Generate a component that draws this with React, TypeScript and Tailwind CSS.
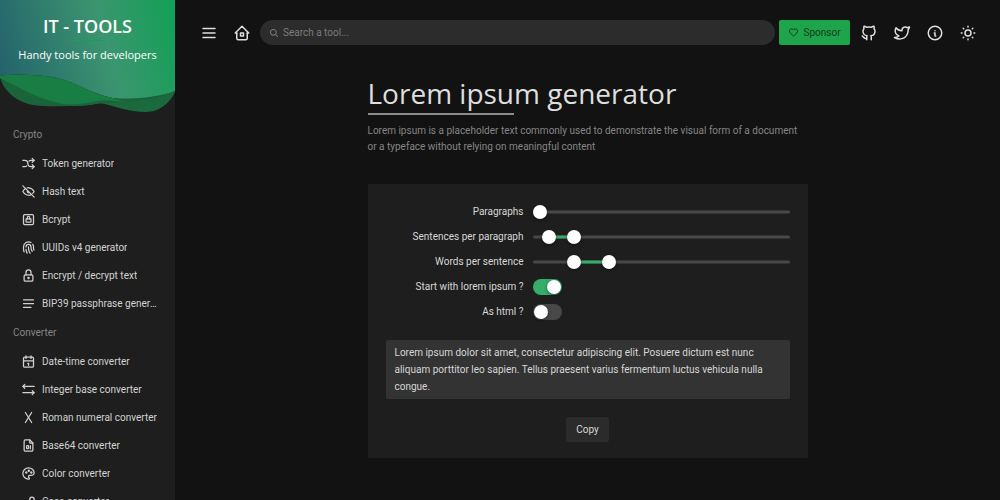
import { useState } from "react";
import type { ReactNode } from "react";
import type { IconType } from "react-icons";
import {
  TbAlignJustified,
  TbArrowsLeftRight,
  TbArrowsShuffle,
  TbBrandGithub,
  TbBrandTwitter,
  TbCalendar,
  TbEyeOff,
  TbFileDigit,
  TbFingerprint,
  TbHeart,
  TbHome2,
  TbInfoCircle,
  TbLetterCaseToggle,
  TbLetterX,
  TbLock,
  TbLockSquare,
  TbMenu2,
  TbPalette,
  TbSun,
} from "react-icons/tb";
import { IoSearch } from "react-icons/io5";

type Tool = { name: string; icon: IconType };

const categories: { name: string; tools: Tool[] }[] = [
  {
    name: "Crypto",
    tools: [
      { name: "Token generator", icon: TbArrowsShuffle },
      { name: "Hash text", icon: TbEyeOff },
      { name: "Bcrypt", icon: TbLockSquare },
      { name: "UUIDs v4 generator", icon: TbFingerprint },
      { name: "Encrypt / decrypt text", icon: TbLock },
      { name: "BIP39 passphrase generator", icon: TbAlignJustified },
    ],
  },
  {
    name: "Converter",
    tools: [
      { name: "Date-time converter", icon: TbCalendar },
      { name: "Integer base converter", icon: TbArrowsLeftRight },
      { name: "Roman numeral converter", icon: TbLetterX },
      { name: "Base64 converter", icon: TbFileDigit },
      { name: "Color converter", icon: TbPalette },
      { name: "Case converter", icon: TbLetterCaseToggle },
    ],
  },
];

const loremText =
  "Lorem ipsum dolor sit amet, consectetur adipiscing elit. Posuere dictum est nunc aliquam porttitor leo sapien. Tellus praesent varius fermentum luctus vehicula nulla congue.";

const THUMB = 14;

function thumbCenter(value: number, min: number, max: number) {
  const ratio = (value - min) / (max - min);
  return `calc(${THUMB / 2}px + (100% - ${THUMB}px) * ${ratio})`;
}

function Slider({
  id,
  label,
  min,
  max,
  values,
  onChange,
}: {
  id: string;
  label: string;
  min: number;
  max: number;
  values: number[];
  onChange: (values: number[]) => void;
}) {
  const start = values.length > 1 ? thumbCenter(values[0], min, max) : "0px";
  const end = thumbCenter(values[values.length - 1], min, max);

  return (
    <div className="relative h-4 w-full">
      <div className="absolute inset-x-0 top-1/2 h-[3px] -translate-y-1/2 rounded-full bg-[#484848]" />
      <div
        className="absolute top-1/2 h-[3px] -translate-y-1/2 bg-[#36ad6a]"
        style={{ left: start, width: `calc(${end} - ${start})` }}
      />
      {values.map((value, i) => (
        <input
          key={i}
          id={i === 0 ? id : `${id}-max`}
          aria-label={i === 0 ? undefined : `${label} (max)`}
          type="range"
          min={min}
          max={max}
          value={value}
          onChange={(e) => {
            const next = [...values];
            next[i] = Number(e.target.value);
            onChange(next.sort((a, b) => a - b));
          }}
          className="pointer-events-none absolute inset-0 m-0 h-full w-full appearance-none bg-transparent [&::-webkit-slider-thumb]:pointer-events-auto [&::-webkit-slider-thumb]:size-[14px] [&::-webkit-slider-thumb]:appearance-none [&::-webkit-slider-thumb]:rounded-full [&::-webkit-slider-thumb]:bg-white [&::-webkit-slider-thumb]:shadow-[0_1px_3px_rgba(0,0,0,0.5)]"
        />
      ))}
    </div>
  );
}

function Switch({ id, checked, onChange }: { id: string; checked: boolean; onChange: (checked: boolean) => void }) {
  return (
    <input
      id={id}
      type="checkbox"
      role="switch"
      checked={checked}
      onChange={(e) => onChange(e.target.checked)}
      className="block h-[16px] w-[29px] cursor-pointer appearance-none rounded-full bg-[#484848] p-px before:block before:size-[14px] before:rounded-full before:bg-white before:shadow-[0_1px_3px_rgba(0,0,0,0.5)] checked:bg-[#36ad6a] checked:before:translate-x-[13px]"
    />
  );
}

function FormRow({ id, label, children }: { id: string; label: string; children: ReactNode }) {
  return (
    <div className="flex h-[25px] items-center gap-[9px]">
      <label htmlFor={id} className="w-[138px] shrink-0 text-right">
        {label}
      </label>
      <div className="flex-1">{children}</div>
    </div>
  );
}

function HeroBackground() {
  return (
    <svg
      className="absolute inset-x-0 top-0 h-[113px] w-full"
      viewBox="0 0 175 113"
      preserveAspectRatio="none"
      aria-hidden="true"
    >
      <defs>
        <linearGradient id="hero" gradientUnits="userSpaceOnUse" x1="0" y1="70" x2="175" y2="20">
          <stop offset="0" stopColor="#25636c" />
          <stop offset="0.6" stopColor="#3b956f" />
          <stop offset="1" stopColor="#14a058" />
        </linearGradient>
      </defs>
      <path d="M0 0H175V91C158 99 134 102 112 98C86 92 70 78 44 76C28 75 12 74 0 76Z" fill="url(#hero)" />
      <path
        d="M0 76C12 74 28 75 44 76C70 78 86 92 112 98C134 102 158 99 175 91C172 101 160 112 146 112C128 112 116 106 100 103C88 106 78 107 62 105C38 101 20 88 0 78Z"
        fill="#1a6a3e"
      />
      <path
        d="M0 76C2 91 20 106 43 106C66 107 85 105 105 103C130 103 150 101 175 91C158 97 134 100 112 98C86 92 70 78 44 76C28 75 12 74 0 76Z"
        fill="#1a633b"
      />
      <path
        d="M0 76C12 74 28 75 44 76C70 78 86 92 112 98L124 102C114 101 106 100 98 101C84 104 74 105 62 104C38 99 20 88 0 78Z"
        fill="#187e43"
      />
    </svg>
  );
}

function Sidebar() {
  return (
    <aside className="h-full w-[175px] shrink-0 overflow-hidden bg-[#1e1e1e]">
      <a href="#" className="relative block h-[119px] text-center font-['Open_Sans','Noto_Sans',sans-serif] text-white">
        <HeroBackground />
        <div className="relative pt-[14px]">
          <div className="text-[18px] leading-6 font-semibold">IT - TOOLS</div>
          <div className="mx-auto mt-[2px] h-px w-9 bg-[#18a058]" />
          <div className="mt-[6px] text-[11px] leading-4">Handy tools for developers</div>
        </div>
      </a>
      <nav>
        {categories.map((category) => (
          <section key={category.name}>
            <h2 className="flex h-[30px] items-center pl-[13px] text-[10px] text-[#858585]">{category.name}</h2>
            <ul>
              {category.tools.map(({ name, icon: Icon }) => (
                <li key={name}>
                  <a href="#" className="flex h-7 items-center gap-[6px] pr-[14px] pl-[21px] text-[#d2d2d2]">
                    <Icon className="size-[15px] shrink-0" />
                    <span className="truncate">{name}</span>
                  </a>
                </li>
              ))}
            </ul>
          </section>
        ))}
      </nav>
    </aside>
  );
}

function IconButton({ label, icon: Icon }: { label: string; icon: IconType }) {
  return (
    <button type="button" aria-label={label} className="flex h-[25px] w-[33px] items-center justify-center text-[#dedede]">
      <Icon className="size-[18px]" />
    </button>
  );
}

function Header() {
  return (
    <header className="flex items-center pt-5 pr-4 pl-[17px]">
      <IconButton label="Toggle menu" icon={TbMenu2} />
      <IconButton label="Home" icon={TbHome2} />
      <label className="mr-1 ml-[2px] flex h-[25px] flex-1 items-center gap-1 rounded-full bg-[#2c2c2c] px-[9px]">
        <IoSearch className="size-[10px] text-[#7c7c7c]" />
        <input
          type="text"
          aria-label="Search"
          placeholder="Search a tool..."
          className="min-w-0 flex-1 bg-transparent outline-none placeholder:text-[#7c7c7c]"
        />
      </label>
      <a
        href="#"
        className="mr-[2px] flex h-[25px] w-[71px] items-center justify-center gap-1 rounded-xs bg-[#1ea54c] text-[#0c3a1b]"
      >
        <TbHeart className="size-[11px]" />
        Sponsor
      </a>
      <IconButton label="GitHub" icon={TbBrandGithub} />
      <IconButton label="Twitter" icon={TbBrandTwitter} />
      <IconButton label="About" icon={TbInfoCircle} />
      <IconButton label="Toggle theme" icon={TbSun} />
    </header>
  );
}

export default function App() {
  const [paragraphs, setParagraphs] = useState([1]);
  const [sentences, setSentences] = useState([3, 8]);
  const [words, setWords] = useState([8, 15]);
  const [startWithLorem, setStartWithLorem] = useState(true);
  const [asHtml, setAsHtml] = useState(false);

  return (
    <div className="flex h-screen bg-[#121212] font-[Roboto,'Noto_Sans',sans-serif] text-[10px] text-[#d6d6d6]">
      <Sidebar />
      <main className="min-w-0 flex-1 overflow-hidden">
        <Header />
        <div className="mx-auto w-full max-w-[440px] pt-7">
          <h1 className="font-['Open_Sans','Noto_Sans',sans-serif] text-[28px] leading-10 text-[#dedede]">
            Lorem ipsum generator
          </h1>
          <div className="h-[2px] w-[146px] bg-[#8c8c8c]" />
          <p className="mt-2 text-[10px] leading-4 text-[#858585]">
            Lorem ipsum is a placeholder text commonly used to demonstrate the visual form of a document or a typeface
            without relying on meaningful content
          </p>

          <div className="mt-[29px] bg-[#1e1e1e] px-[18px] pt-[15px] pb-4">
            <FormRow id="paragraphs" label="Paragraphs">
              <Slider id="paragraphs" label="Paragraphs" min={1} max={20} values={paragraphs} onChange={setParagraphs} />
            </FormRow>
            <FormRow id="sentences" label="Sentences per paragraph">
              <Slider id="sentences" label="Sentences per paragraph" min={1} max={50} values={sentences} onChange={setSentences} />
            </FormRow>
            <FormRow id="words" label="Words per sentence">
              <Slider id="words" label="Words per sentence" min={1} max={50} values={words} onChange={setWords} />
            </FormRow>
            <FormRow id="start" label="Start with lorem ipsum ?">
              <Switch id="start" checked={startWithLorem} onChange={setStartWithLorem} />
            </FormRow>
            <FormRow id="html" label="As html ?">
              <Switch id="html" checked={asHtml} onChange={setAsHtml} />
            </FormRow>

            <textarea
              readOnly
              aria-label="Generated text"
              rows={3}
              value={loremText}
              className="mt-4 block w-full resize-none rounded-xs bg-[#333333] px-[9px] py-1 leading-[17px] outline-none"
            />

            <div className="mt-[18px] flex justify-center">
              <button
                type="button"
                onClick={() => navigator.clipboard.writeText(loremText)}
                className="h-[25px] rounded-xs bg-[#2b2b2b] px-[10px]"
              >
                Copy
              </button>
            </div>
          </div>
        </div>
      </main>
    </div>
  );
}
